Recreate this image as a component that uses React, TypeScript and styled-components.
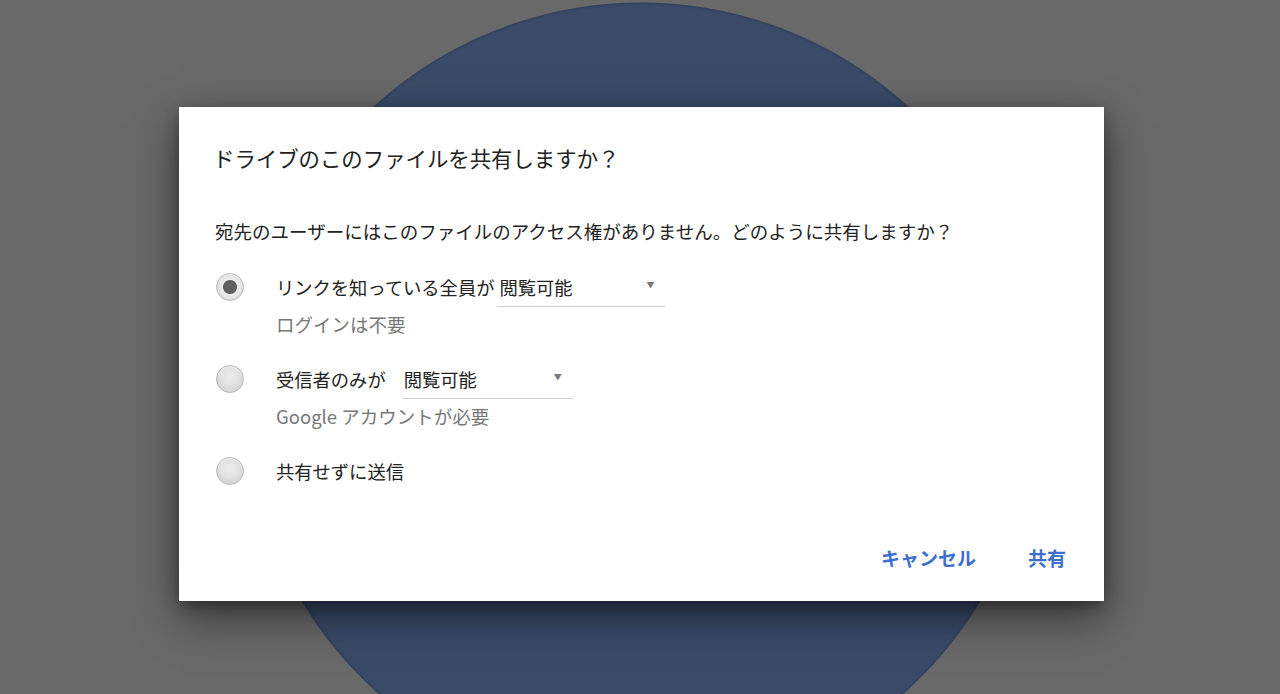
import React from 'react'
import styled, { createGlobalStyle } from 'styled-components'

const GlobalStyle = createGlobalStyle`
	html, body {
		margin: 0;
		padding: 0;
	}
	body {
		font-family: 'Noto Sans CJK JP', 'Noto Sans', 'Liberation Sans', sans-serif;
		color: #222222;
	}
`

const options = [
	{ id: 'anyone', label: 'リンクを知っている全員が', note: 'ログインは不要', select: { width: 168, gap: 3 } },
	{ id: 'recipients', label: '受信者のみが', note: 'Google アカウントが必要', select: { width: 171, gap: 16 } },
	{ id: 'none', label: '共有せずに送信' },
]

const App = () => {
	const [selected, setSelected] = React.useState('anyone')

	return (
		<Page>
			<GlobalStyle />
			<Dialog>
				<Title>ドライブのこのファイルを共有しますか？</Title>
				<Message>宛先のユーザーにはこのファイルのアクセス権がありません。どのように共有しますか？</Message>
				<OptionList>
					{options.map(option => (
						<Option key={option.id}>
							<OptionRow>
								<Radio $checked={selected === option.id} onClick={() => setSelected(option.id)} />
								<OptionLabel>{option.label}</OptionLabel>
								{option.select && (
									<Select $width={option.select.width} $gap={option.select.gap}>
										閲覧可能
										<Caret>▼</Caret>
									</Select>
								)}
							</OptionRow>
							{option.note && <OptionNote>{option.note}</OptionNote>}
						</Option>
					))}
				</OptionList>
				<Footer>
					<TextButton>キャンセル</TextButton>
					<TextButton>共有</TextButton>
				</Footer>
			</Dialog>
		</Page>
	)
}

export default App

const Page = styled.div`
	width: 1280px;
	height: 694px;
	box-sizing: border-box;
	padding: 107px 0 0 179px;
	overflow: hidden;
	background: radial-gradient(
		circle 396px at 641px 398px,
		#3a4b69 0,
		#3a4b69 392px,
		#33435e 395px,
		#696969 396px
	);
`

const Dialog = styled.section`
	width: 925px;
	height: 494px;
	box-sizing: border-box;
	padding: 37px 30px 25px 34px;
	display: flex;
	flex-direction: column;
	background: #ffffff;
	box-shadow: 0 16px 40px rgba(0, 0, 0, 0.5), 0 4px 12px rgba(0, 0, 0, 0.3);
`

const Title = styled.h1`
	margin: 0;
	font-size: 21.4px;
	font-weight: 400;
	line-height: 28px;
	color: #222222;
`

const Message = styled.p`
	margin: 46px 0 0 2px;
	font-size: 18.5px;
	line-height: 26px;
	color: #222222;
`

const OptionList = styled.div`
	display: flex;
	flex-direction: column;
	gap: 22px;
	margin-top: 23px;
	padding-left: 3px;
`

const Option = styled.div`
	display: flex;
	flex-direction: column;
	gap: 4px;
`

const OptionRow = styled.div`
	display: flex;
	align-items: center;
	min-height: 40px;
`

const Radio = styled.span<{ $checked: boolean }>`
	width: 28px;
	height: 28px;
	box-sizing: border-box;
	border-radius: 50%;
	border: 1px solid #b8b8b8;
	flex: none;
	cursor: pointer;
	background: ${({ $checked }) =>
		$checked
			? 'radial-gradient(circle, #5f5f5f 0, #5f5f5f 6.5px, #eeeeee 7.5px, #e4e4e4 11px, #dadada 13px)'
			: 'radial-gradient(circle at 50% 40%, #ececec 0, #e2e2e2 9px, #d8d8d8 13px)'};
	box-shadow: inset 0 1px 1px rgba(255, 255, 255, 0.7);
`

const OptionLabel = styled.span`
	margin-left: 32px;
	font-size: 18.3px;
	line-height: 26px;
	color: #222222;
`

const Select = styled.span<{ $width: number; $gap: number }>`
	position: relative;
	width: ${({ $width }) => $width}px;
	margin-left: ${({ $gap }) => $gap}px;
	box-sizing: border-box;
	padding: 7px 0 6px 2px;
	font-size: 18.3px;
	line-height: 26px;
	color: #222222;
	border-bottom: 1px solid #cfcfcf;
	cursor: pointer;
`

const Caret = styled.span`
	position: absolute;
	right: 11px;
	top: 13px;
	font-size: 8px;
	line-height: 10px;
	color: #777777;
`

const OptionNote = styled.span`
	margin-left: 60px;
	font-size: 18.5px;
	line-height: 26px;
	color: #777777;
`

const Footer = styled.div`
	display: flex;
	justify-content: flex-end;
	gap: 36px;
	margin-top: auto;
`

const TextButton = styled.button`
	height: 36px;
	padding: 0 8px;
	border: none;
	background: transparent;
	font-family: inherit;
	font-size: 19px;
	font-weight: 700;
	line-height: 26px;
	color: #3d6fcf;
	cursor: pointer;
`
